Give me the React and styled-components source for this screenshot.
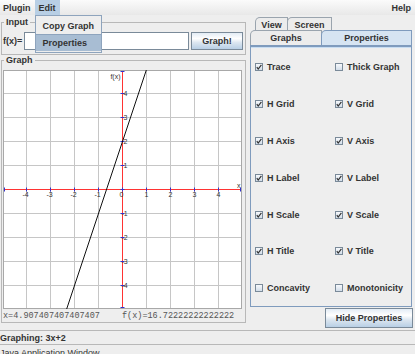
import React from "react";
import styled, { createGlobalStyle } from "styled-components";

const GlobalStyle = createGlobalStyle`
  * { box-sizing: border-box; }
  html, body { margin: 0; padding: 0; background: #eeeeee; }
  body {
    width: 415px;
    height: 354px;
    overflow: hidden;
    font-family: "Liberation Sans", Arial, sans-serif;
    font-size: 9px;
    font-weight: bold;
    color: #333333;
  }
`;

const Window = styled.div`
  position: relative;
  width: 415px;
  height: 354px;
  overflow: hidden;
  display: flex;
  flex-direction: column;
  & > * { flex-shrink: 0; }
`;

const MenuBar = styled.div`
  height: 15px;
  display: flex;
  background: linear-gradient(#fbfbfb, #e8e8e8);
`;

const Menu = styled.div`
  position: relative;
  display: flex;
  align-items: center;
  padding: 0 4px 0 ${(p) => (p.$first ? 3 : 4)}px;
  margin-left: ${(p) => (p.$right ? "auto" : "0")};
  background: ${(p) => (p.$open ? "#b8cfe5" : "transparent")};
`;

const Popup = styled.div`
  position: absolute;
  top: 15px;
  left: 0;
  width: 67px;
  padding: 1px 0;
  background: #eeeeee;
  border: 1px solid #8ea4bd;
  z-index: 10;
`;

const PopupItem = styled.div`
  height: 17px;
  display: flex;
  align-items: center;
  padding-left: 7px;
  white-space: nowrap;
  background: ${(p) => (p.$active ? "#a8bdd3" : "transparent")};
  border-top: 1px solid ${(p) => (p.$active ? "#8ea4bd" : "transparent")};
`;

const Main = styled.div`
  height: 315px;
  display: flex;
  gap: 4px;
`;

const LeftColumn = styled.div`
  width: 246px;
  padding: 2px 0 0 1px;
  display: flex;
  flex-direction: column;
`;

const Group = styled.fieldset`
  margin: 0;
  min-width: 0;
  width: 245px;
  padding: 0 0 ${(p) => p.$bottom || 0}px 1px;
  border: 1px solid #b8b8b8;
`;

const Legend = styled.legend`
  padding: 0 2px;
  margin-left: 1px;
  font-size: 9px;
  line-height: 10px;
`;

const InputRow = styled.div`
  margin-top: 5px;
  height: 18px;
  display: flex;
  align-items: center;
  gap: 2px;
`;

const FieldLabel = styled.span`
  width: 19px;
`;

const TextField = styled.div`
  width: 165px;
  height: 18px;
  background: #ffffff;
  border: 1px solid #7a8a99;
`;

const Button = styled.div`
  width: ${(p) => p.$w}px;
  height: ${(p) => p.$h}px;
  margin-top: ${(p) => p.$top || 0}px;
  align-self: ${(p) => (p.$end ? "flex-end" : "auto")};
  display: flex;
  align-items: center;
  justify-content: center;
  border: 1px solid #7a8a99;
  background: linear-gradient(#e3ecf5 0%, #ffffff 35%, #dce6f0 60%, #b8cfe5 100%);
`;

const PlotBox = styled.svg`
  display: block;
  margin-top: 5px;
  font-family: "Liberation Sans", Arial, sans-serif;
  font-weight: normal;
`;

const Readout = styled.div`
  display: grid;
  grid-template-columns: 119px 1fr;
  height: 13px;
  align-items: center;
  font-family: "Liberation Mono", "Courier New", monospace;
  font-size: 8.5px;
  font-weight: normal;
  color: #555555;
  white-space: nowrap;
`;

const RightColumn = styled.div`
  width: 163px;
  display: flex;
  flex-direction: column;
  align-items: flex-start;
`;

const TabRun = styled.div`
  display: flex;
  padding-left: ${(p) => p.$indent || 0}px;
  margin-top: ${(p) => p.$top}px;
  position: relative;
  z-index: ${(p) => (p.$front ? 2 : 1)};
`;

const Tab = styled.div`
  width: ${(p) => p.$w}px;
  height: ${(p) => p.$h}px;
  display: flex;
  align-items: center;
  justify-content: center;
  margin-right: -1px;
  border: 1px solid ${(p) => (p.$selected ? "#7f9bbd" : "#9aa4ae")};
  border-bottom: none;
  border-top-left-radius: 5px;
  background: ${(p) => (p.$selected ? "#d6e4f2" : "#ececec")};
`;

const TabContent = styled.div`
  width: 162px;
  height: 262px;
  border: 1px solid #7f9bbd;
  border-top-width: 2px;
  box-shadow: inset 0 1px 0 #c8ddf2;
  padding: 2px 0 0 4px;
  display: grid;
  grid-template-columns: 80px 1fr;
  grid-auto-rows: 36.8px;
`;

const Check = styled.label`
  display: flex;
  align-items: center;
  gap: 4px;
  white-space: nowrap;
`;

const Box = styled.span`
  width: 8px;
  height: 8px;
  display: flex;
  align-items: center;
  justify-content: center;
  border: 1px solid #7a8a99;
  background: linear-gradient(#f7f9fc, #d2dde9);
`;

const StatusBar = styled.div`
  height: 15px;
  display: flex;
  align-items: center;
  border-top: 1px solid #b8b8b8;
  border-bottom: 1px solid #b8b8b8;
`;

const Caption = styled.div`
  padding-top: 3px;
  font-weight: normal;
  white-space: nowrap;
`;

function CheckItem({ label, checked }) {
  return (
    <Check>
      <Box>
        {checked && (
          <svg width="6" height="6" viewBox="0 0 6 6">
            <path d="M0.8 3.2 L2.2 5 L5.4 0.8" fill="none" stroke="#333" strokeWidth="1.2" />
          </svg>
        )}
      </Box>
      {label}
    </Check>
  );
}

const SIZE = 239;
const C = 119.5;
const UNIT = 24;

function Plot() {
  const ks = [-4, -3, -2, -1, 0, 1, 2, 3, 4];
  const yTop = C / UNIT;
  const x1 = C + ((yTop - 2) / 3) * UNIT;
  const x2 = C + ((-yTop - 2) / 3) * UNIT;
  return (
    <PlotBox width={SIZE} height={SIZE}>
      <rect x="0.5" y="0.5" width={SIZE - 1} height={SIZE - 1} fill="#fff" stroke="#a8a8a8" />
      {ks.map((k) => (
        <g key={k} stroke="#c6c6c6">
          <line x1={C + k * UNIT} y1="1" x2={C + k * UNIT} y2={SIZE - 1} />
          <line x1="1" y1={C + k * UNIT} x2={SIZE - 1} y2={C + k * UNIT} />
        </g>
      ))}
      <line x1={C} y1="1" x2={C} y2={SIZE - 1} stroke="#ff3333" />
      <line x1="1" y1={C} x2={SIZE - 1} y2={C} stroke="#ff3333" />
      <g stroke="#3333cc">
        {ks.map((k) => (
          <g key={k}>
            <line x1={C + k * UNIT} y1={C - 2} x2={C + k * UNIT} y2={C + 2} />
            <line x1={C - 2} y1={C + k * UNIT} x2={C + 2} y2={C + k * UNIT} />
          </g>
        ))}
        <line x1={C - 2} y1="1.5" x2={C + 2} y2="1.5" />
        <line x1={C - 2} y1={SIZE - 1.5} x2={C + 2} y2={SIZE - 1.5} />
        <line x1="1.5" y1={C - 2} x2="1.5" y2={C + 2} />
        <line x1={SIZE - 1.5} y1={C - 2} x2={SIZE - 1.5} y2={C + 2} />
      </g>
      <g fontSize="7" fill="#333">
        {ks.map((k) => (
          <text key={"x" + k} x={C + k * UNIT - (k <= 0 ? 1 : 0)} y={C + 7.5} textAnchor="middle">
            {k}
          </text>
        ))}
        {ks
          .filter((k) => k !== 0)
          .map((k) => (
            <text key={"y" + k} x={k > 0 ? C + 1 : C - 1} y={C - k * UNIT + 2.5}>
              {k}
            </text>
          ))}
        <text x={C - 2} y="9" textAnchor="end">f(x)</text>
        <text x={SIZE - 5} y={C - 2}>x</text>
      </g>
      <line x1={x1} y1="0" x2={x2} y2={SIZE} stroke="#111" />
    </PlotBox>
  );
}

export default function App() {
  const checks = [
    ["Trace", true], ["Thick Graph", false],
    ["H Grid", true], ["V Grid", true],
    ["H Axis", true], ["V Axis", true],
    ["H Label", true], ["V Label", true],
    ["H Scale", true], ["V Scale", true],
    ["H Title", true], ["V Title", true],
    ["Concavity", false], ["Monotonicity", false],
  ];
  return (
    <>
      <GlobalStyle />
      <Window>
        <MenuBar>
          <Menu $first>Plugin</Menu>
          <Menu $open>
            Edit
            <Popup>
              <PopupItem>Copy Graph</PopupItem>
              <PopupItem $active>Properties</PopupItem>
            </Popup>
          </Menu>
          <Menu $right>Help</Menu>
        </MenuBar>
        <Main>
          <LeftColumn>
            <Group $bottom={4}>
              <Legend>Input</Legend>
              <InputRow>
                <FieldLabel>f(x)=</FieldLabel>
                <TextField />
                <Button $w={52} $h={18}>Graph!</Button>
              </InputRow>
            </Group>
            <Group>
              <Legend>Graph</Legend>
              <Plot />
              <Readout>
                <span>x=4.907407407407407</span>
                <span>f(x)=16.72222222222222</span>
              </Readout>
            </Group>
          </LeftColumn>
          <RightColumn>
            <TabRun $top={2} $indent={5}>
              <Tab $w={33} $h={14}>View</Tab>
              <Tab $w={45} $h={14}>Screen</Tab>
            </TabRun>
            <TabRun $top={-1} $front>
              <Tab $w={72} $h={15}>Graphs</Tab>
              <Tab $w={91} $h={15} $selected>Properties</Tab>
            </TabRun>
            <TabContent>
              {checks.map(([label, on]) => (
                <CheckItem key={label} label={label} checked={on} />
              ))}
            </TabContent>
            <Button $w={88} $h={20} $top={1} $end>
              Hide Properties
            </Button>
          </RightColumn>
        </Main>
        <StatusBar>Graphing: 3x+2</StatusBar>
        <Caption>Java Application Window</Caption>
      </Window>
    </>
  );
}
